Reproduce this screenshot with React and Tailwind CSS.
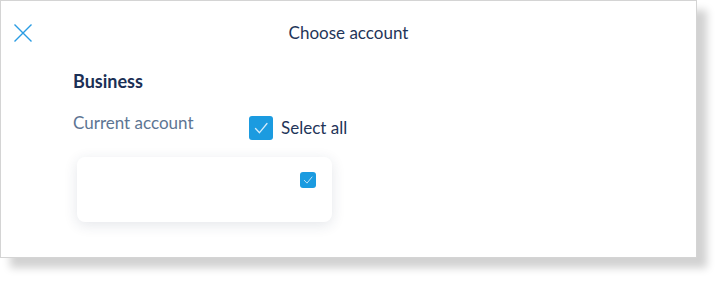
import React from 'react';

function Check({ size }) {
  return (
    <svg width={size} height={size} viewBox="0 0 24 24" fill="none">
      <path d="M6.5 12.5l4 4.2L18 7.5" stroke="#d4ecfa" strokeWidth="1.3" strokeLinecap="round" strokeLinejoin="round" />
    </svg>
  );
}

export default function App() {
  return (
    <div className="w-[719px] h-[281px] bg-white font-['Lato',sans-serif]">
      <div className="w-[697px] h-[258px] bg-white border border-[#d4d4d4] shadow-[10px_10px_8px_rgba(0,0,0,0.18)] flex flex-col">
        <div className="relative flex items-center justify-center h-[64px]">
          <button className="absolute left-[12px] top-[22px] w-[20px] h-[20px] flex items-center justify-center">
            <svg width="20" height="20" viewBox="0 0 20 20" fill="none">
              <path d="M1.5 1.5l17 17M18.5 1.5l-17 17" stroke="#2a9ce3" strokeWidth="1.4" />
            </svg>
          </button>
          <h1 className="text-[17px] text-[#1f3559] leading-[24px] -mt-[1px]">Choose account</h1>
        </div>
        <div className="pl-[72px] pt-[5px]">
          <h2 className="text-[18px] font-bold text-[#1b2f55] leading-[22px]">Business</h2>
          <div className="flex items-start mt-[17px]">
            <div className="w-[176px] text-[17px] leading-[24px] text-[#5d7593] pt-[2px]">Current account</div>
            <label className="flex items-center gap-[8px] mt-[7px]">
              <span className="w-[24px] h-[24px] rounded-[3px] bg-[#1b9be0] flex items-center justify-center">
                <Check size={24} />
              </span>
              <span className="text-[17px] leading-[24px] text-[#1f3559]">Select all</span>
            </label>
          </div>
          <div className="mt-[17px] ml-[4px] w-[255px] h-[65px] rounded-[8px] bg-white shadow-[0_3px_14px_rgba(30,50,80,0.12)] flex justify-end pt-[15px] pr-[16px]">
            <span className="w-[16px] h-[16px] rounded-[3px] bg-[#1b9be0] flex items-center justify-center">
              <Check size={16} />
            </span>
          </div>
        </div>
      </div>
    </div>
  );
}
